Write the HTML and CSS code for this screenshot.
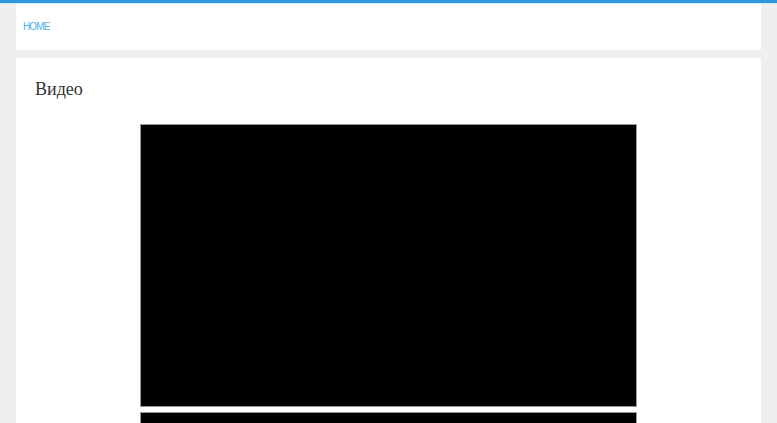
FILE: index.html
```html
<!DOCTYPE html>
<html lang="ru">
<head>
<meta charset="utf-8">
<title>Видео</title>
<link rel="stylesheet" href="styles.css">
</head>
<body>
<div class="topbar"></div>
<div class="wrap">
  <header class="crumbs">
    <a class="home" href="#">HOME</a>
  </header>
  <main class="card">
    <h1 class="title">Видео</h1>
    <div class="videos">
      <div class="video"></div>
      <div class="video"></div>
    </div>
  </main>
</div>
</body>
</html>
```
FILE: styles.css
```css
html, body {
  margin: 0;
  padding: 0;
}
body {
  background: #efefef;
  font-family: "Liberation Sans", Arial, sans-serif;
  height: 423px;
  overflow: hidden;
}
.topbar {
  height: 3px;
  background: #2a97de;
  border-bottom: 1px solid #d8e8f4;
}
.wrap {
  width: 745px;
  margin: 0 16px;
  display: flex;
  flex-direction: column;
  gap: 8px;
}
.crumbs {
  background: #fff;
  height: 46px;
  display: flex;
  align-items: center;
  padding-left: 7px;
  box-sizing: border-box;
}
.home {
  color: #4fb1ea;
  font-size: 10px;
  letter-spacing: -0.9px;
  text-decoration: none;
  line-height: 1;
}
.card {
  background: #fff;
  padding: 19px 19px 0;
  min-height: 400px;
}
.title {
  margin: 0;
  font-family: "Liberation Serif", "Times New Roman", serif;
  font-weight: normal;
  font-size: 18px;
  line-height: 24px;
  color: #333;
}
.videos {
  margin-top: 23px;
  display: flex;
  flex-direction: column;
  align-items: center;
  gap: 5px;
}
.video {
  width: 497px;
  height: 283px;
  background: #000;
  border: 1px solid #999;
  box-sizing: border-box;
}
```
